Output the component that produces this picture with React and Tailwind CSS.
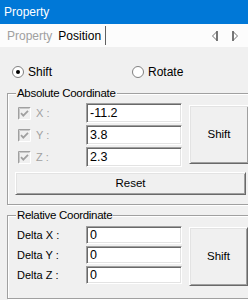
import React from "react";

const inputCls =
  "w-[96px] bg-white border-t border-l border-b border-r border-t-[#a0a0a0] border-l-[#a0a0a0] border-b-white border-r-white shadow-[inset_1px_1px_0_#696969,inset_-1px_-1px_0_#e3e3e3] text-[12.5px] pl-[3px] flex items-center";

const btnCls =
  "bg-[#f0f0f0] border-t border-l border-b border-r border-t-white border-l-white border-b-[#696969] border-r-[#696969] shadow-[inset_1px_1px_0_#e3e3e3,inset_-1px_-1px_0_#a0a0a0] flex items-center justify-center text-[11.5px]";

function Radio({ checked }) {
  return (
    <svg width="12" height="12" viewBox="0 0 12 12">
      <circle cx="6" cy="6" r="5.5" fill="#fff" stroke="#808080" />
      {checked && <circle cx="6" cy="6" r="2" fill="#000" />}
    </svg>
  );
}

function Check() {
  return (
    <svg width="13" height="13" viewBox="0 0 13 13">
      <rect x="0" y="0" width="13" height="13" fill="#f0f0f0" />
      <path d="M0.5 12.5V0.5H12.5" stroke="#a0a0a0" fill="none" />
      <path d="M0.5 12.5H12.5V0.5" stroke="#ffffff" fill="none" />
      <path d="M1.5 11.5V1.5H11.5" stroke="#c8c8c8" fill="none" />
      <path d="M3 6.2 L5.3 8.6 L10 3.8" stroke="#a0a0a0" strokeWidth="1.8" fill="none" />
    </svg>
  );
}

function Arrow({ dir }) {
  return (
    <svg width="6" height="10" viewBox="0 0 6 10">
      {dir === "left" ? (
        <>
          <polygon points="5,0.5 0.5,5 5,9.5" fill="#fff" stroke="#707070" />
          <line x1="5" y1="0" x2="5" y2="10" stroke="#606060" strokeWidth="1.5" />
        </>
      ) : (
        <>
          <polygon points="1,0.5 5.5,5 1,9.5" fill="#fff" stroke="#707070" />
          <line x1="1" y1="0" x2="1" y2="10" stroke="#606060" strokeWidth="1.5" />
        </>
      )}
    </svg>
  );
}

function Group({ title, className, children }) {
  return (
    <div
      className={
        "relative ml-[7px] w-[243px] border border-[#a0a0a0] shadow-[inset_1px_1px_0_#fff,1px_1px_0_#fff] " +
        className
      }
    >
      <span className="absolute left-[8px] top-[-7px] px-[1px] leading-[13px] bg-[#f0f0f0] text-[11.5px] tracking-[-0.3px]">
        {title}
      </span>
      {children}
    </div>
  );
}

export default function App() {
  return (
    <div className="w-[248px] h-[300px] overflow-hidden bg-[#f0f0f0] text-black text-[11px] font-['Liberation_Sans',Arial,sans-serif]">
      <div className="h-[24px] bg-[#0078d7] text-white text-[12px] flex items-center pl-[4px]">
        Property
      </div>
      <div className="h-[23px] bg-[#fcfcfc] flex items-center text-[12px]">
        <span className="ml-[7px] text-[#a0a0a0]">Property</span>
        <span className="ml-[6px]">Position</span>
        <span className="ml-[4px] w-px h-[19px] bg-[#606060]" />
        <div className="ml-auto mr-[10px] flex items-center gap-[14px]">
          <Arrow dir="left" />
          <Arrow dir="right" />
        </div>
      </div>

      <div className="pt-[17px]">
        <div className="h-[16px] flex items-center text-[12px]">
          <div className="ml-[12px] flex items-center">
            <Radio checked />
            <span className="ml-[4px]">Shift</span>
          </div>
          <div className="ml-[80px] flex items-center">
            <Radio />
            <span className="ml-[4px]">Rotate</span>
          </div>
        </div>

        <Group title="Absolute Coordinate" className="mt-[13px] h-[112px]">
          <div className="pt-[9px] pl-[10px] flex">
            <div className="flex flex-col gap-[2px]">
              {[
                ["X :", "-11.2"],
                ["Y :", "3.8"],
                ["Z :", "2.3"],
              ].map(([l, v]) => (
                <div key={l} className="h-[20px] flex items-center">
                  <Check />
                  <span className="w-[55px] pl-[5px] text-[#a0a0a0] text-[11px]">{l}</span>
                  <div className={inputCls + " h-[20px]"}>{v}</div>
                </div>
              ))}
            </div>
            <div className={btnCls + " ml-[7px] mt-[2px] w-[60px] h-[59px]"}>Shift</div>
          </div>
          <div className={btnCls + " ml-[7px] mt-[5px] w-[231px] h-[23px]"}>Reset</div>
        </Group>

        <Group title="Relative Coordinate" className="mt-[10px] h-[84px]">
          <div className="pt-[10px] pl-[9px] flex">
            <div className="flex flex-col gap-[2px]">
              {[
                ["Delta X :", "0"],
                ["Delta Y :", "0"],
                ["Delta Z :", "0"],
              ].map(([l, v]) => (
                <div key={l} className="h-[18px] flex items-center">
                  <span className="w-[69px] text-[11px]">{l}</span>
                  <div className={inputCls + " h-[18px]"}>{v}</div>
                </div>
              ))}
            </div>
            <div className={btnCls + " ml-[7px] mt-[1px] w-[59px] h-[59px]"}>Shift</div>
          </div>
        </Group>
      </div>
    </div>
  );
}
